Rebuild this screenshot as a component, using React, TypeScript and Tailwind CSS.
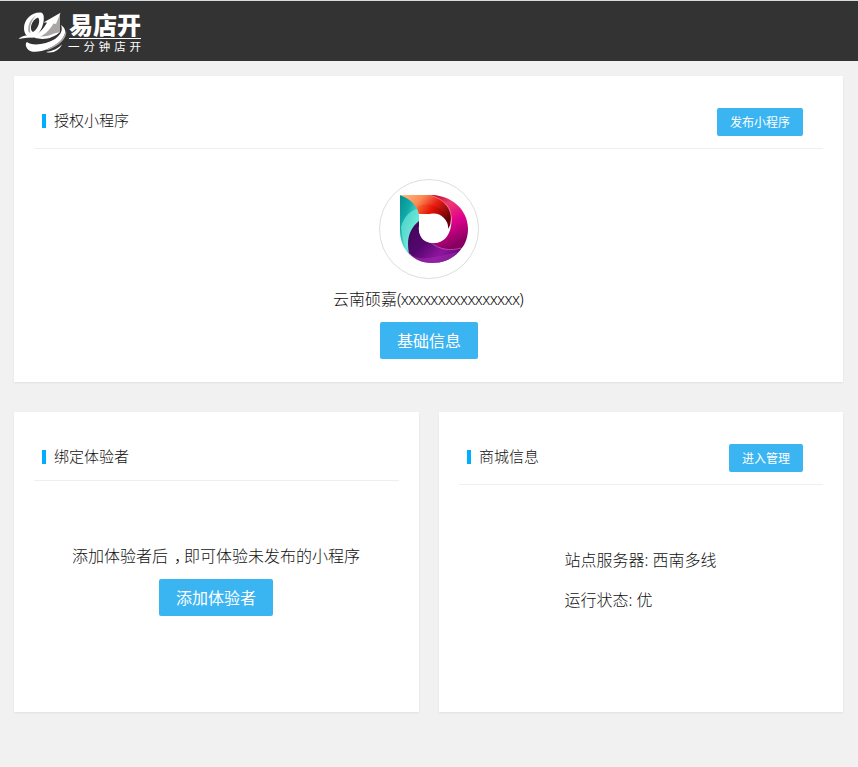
import type { ReactNode } from "react";

function BrandMark() {
  return (
    <svg viewBox="18 10 50 45" className="h-[45px] w-[50px] shrink-0">
      <path d="M48 30 L60 14 L60 32 L55 34 C51 36.5 45 37.5 38 37 Z" fill="#aaa6a5" />
      <path d="M33 36.5 C40 33 44 28 47 22.5 L43.5 22.5 L60.5 12.8 L56 24 L53.5 23.5 C49 31 44 35.5 37 38 Z" fill="#fff" />
      <path fillRule="evenodd" d="M40 12.5 C31 12.5 24 20 24 28 C24 34 27 37.5 33 37.5 C40 34 43.5 26 43.8 19 C44 15 43 12.5 40 12.5 Z M38 17.5 C41 21 38 29 33 32 C29 30 31 20 38 17.5 Z" fill="#fff" />
      <path d="M36.5 15.5 C31 18 27 25 28.5 32 L30.5 33 C29 28 31 20 36.5 15.5 Z" fill="#aaa6a5" />
      <path d="M18.5 38.9 C23 35 29 34 37 37 C30 38 25 37.5 18.5 38.9 Z" fill="#fff" />
      <path d="M28 33 C34 37 46 38 54 33.5 L60 32 C52 40 36 42 28 33 Z" fill="#fff" />
      <path d="M61 25 C66.5 28.5 66.5 34 61.5 40 C52 50 33 55 28 49.5 C25 46 25.5 43 27 42 C31 46 46 45 55 39 C61 34.5 63 30 61 25 Z" fill="#fff" />
      <path d="M66 30 C68 38 59 46 48 50 L46 50 C56 45 64 40 66 30 Z" fill="#aaa6a5" />
      <path d="M46 52 C53 51 59 48 62 44 C60 50 53 54 46 52 Z" fill="#fff" />
    </svg>
  );
}

function Avatar() {
  return (
    <svg viewBox="0 0 100 100" className="block size-[100px]">
      <defs>
        <linearGradient id="teal" x1="0" y1="0" x2=".8" y2="1">
          <stop offset="0" stopColor="#058c91" />
          <stop offset=".35" stopColor="#10aaa9" />
          <stop offset=".7" stopColor="#65e4d6" />
          <stop offset="1" stopColor="#087e87" />
        </linearGradient>
        <linearGradient id="red" x1="0" y1="0" x2="1" y2=".6">
          <stop offset="0" stopColor="#ffc27e" />
          <stop offset=".35" stopColor="#fb8a55" />
          <stop offset=".62" stopColor="#e92015" />
          <stop offset="1" stopColor="#650008" />
        </linearGradient>
        <linearGradient id="inner" x1="0" y1="0" x2="1" y2=".5">
          <stop offset="0" stopColor="#f87535" />
          <stop offset=".45" stopColor="#e81408" />
          <stop offset="1" stopColor="#700008" />
        </linearGradient>
        <linearGradient id="pink" x1="0" y1="0" x2=".35" y2="1">
          <stop offset="0" stopColor="#b60022" />
          <stop offset=".28" stopColor="#ed3c70" />
          <stop offset=".62" stopColor="#df008e" />
          <stop offset="1" stopColor="#870060" />
        </linearGradient>
        <linearGradient id="violet" x1="0" y1="0" x2="1" y2=".8">
          <stop offset="0" stopColor="#3b0754" />
          <stop offset=".45" stopColor="#56066f" />
          <stop offset=".75" stopColor="#8f159e" />
          <stop offset="1" stopColor="#5b0676" />
        </linearGradient>
      </defs>
      <circle cx="50" cy="50" r="49.5" fill="#fff" stroke="#ddd" />
      <path d="M21 16 C32 19 39 26 40 36 L40 43 C32 50 28 62 31 76 C24 69 21 61 21 51 Z" fill="url(#teal)" />
      <path d="M22 48 C25 37 32 31 39 30 L40 43 C32 48 28 60 30 74 C25 68 23 59 22 48 Z" fill="#6ee8d9" opacity=".7" />
      <path d="M21 16 H54 C66 17 74 27 72 40 C72 44 71 47 69 50 C68 41 61 35 53 35 H40 C38 27 32 20 21 16 Z" fill="url(#red)" />
      <path d="M38 28 C45 24 56 24 66 34 L69 49 C68 41 61 35 53 35 H40 Z" fill="url(#inner)" />
      <path d="M50 16 C70 15 89 29 89 50 C89 60 85 68 80 72 C70 72 60 70 54 64 C64 64 70 58 72 47 C75 32 66 20 50 16 Z" fill="url(#pink)" />
      <path d="M40 42 V50 C40 59 46 64 54 64 C62 70 72 72 82 70 C76 79 65 84 53 84 C42 84 34 79 30 74 C27 60 31 49 40 42 Z" fill="url(#violet)" />
      <path d="M30 75 C43 84 61 76 79 73 C73 80 64 84 53 84 C43 84 35 80 30 75 Z" fill="#9828a8" opacity=".65" />
      <path d="M51 63 C60 71 72 72 82 69" fill="none" stroke="#dc65b9" strokeWidth=".6" />
      <path d="M50 16 C66 20 74 30 72 44" fill="none" stroke="#fa8c88" strokeWidth=".7" />
      <circle cx="54.5" cy="49.3" r="14.7" fill="#fff" />
      <path d="M40 35 H54 V49 H40 Z" fill="#fff" />
    </svg>
  );
}

function Button({ children, small = false }: { children: ReactNode; small?: boolean }) {
  return (
    <button
      className={`block shrink-0 rounded-[2px] bg-[#3bb4f2] font-normal text-white ${
        small ? "h-7 px-[13px] pt-px text-xs leading-[27px]" : "h-[37px] px-[17px] pt-[2px] text-base leading-[35px]"
      }`}
    >
      {children}
    </button>
  );
}

function CardHeader({ title, action }: { title: string; action?: string }) {
  return (
    <div className={`flex items-start justify-between border-b border-[#eeeff5] pt-8 pr-5 pl-2 ${action ? "h-[73px]" : "h-[69px]"}`}>
      <h2 className="flex h-[26px] items-center gap-2 text-[15px]">
        <span className="h-[14px] w-1 bg-[#00aeff]" />
        <span className="pb-[2px] leading-6">{title}</span>
      </h2>
      {action && <Button small>{action}</Button>}
    </div>
  );
}

const card = "bg-white px-5 shadow-[0_1px_2px_rgba(0,0,0,0.07)]";

export default function App() {
  return (
    <div className="min-h-[767px] bg-[#f1f1f1] font-['Noto_Sans','Noto_Sans_CJK_SC',sans-serif] font-light text-[#111]">
      <header className="flex h-[61px] border-t border-[#d9dcdf] bg-[#333] pt-[9px] pl-[18px] text-white">
        <BrandMark />
        <div className="w-[73px]">
          <div className="ml-px h-[29px] border-b border-white font-['Noto_Sans_CJK_SC',sans-serif] text-[24px] leading-[27px] font-black whitespace-nowrap">易店开</div>
          <div className="flex h-[16px] justify-between text-[11.5px] leading-[16px] font-normal">
            {"一分钟店开".split("").map((c) => <span key={c}>{c}</span>)}
          </div>
        </div>
      </header>

      <main className="grid grid-cols-[405px_404px] gap-x-5 gap-y-[30px] pt-[15px] pl-[14px]">
        <section className={`${card} col-span-2 h-[306px]`}>
          <CardHeader title="授权小程序" action="发布小程序" />
          <div className="flex flex-col items-center pt-[30px]">
            <Avatar />
            <p className="mt-2 mb-[11px] pr-px text-base leading-6">
              云南硕嘉<span className="tracking-[-0.65px]">(xxxxxxxxxxxxxxxx)</span>
            </p>
            <div className="pl-px">
              <Button>基础信息</Button>
            </div>
          </div>
        </section>

        <section className={`${card} h-[300px]`}>
          <CardHeader title="绑定体验者" />
          <div className="flex flex-col items-center pt-[63px] pr-px">
            <p className="mb-[11px] text-base leading-6 whitespace-nowrap">
              添加体验者后<span className="pr-[2px] pl-[6px] [font-feature-settings:'halt']">，</span>即可体验未发布的小程序
            </p>
            <Button>添加体验者</Button>
          </div>
        </section>

        <section className={`${card} h-[300px]`}>
          <CardHeader title="商城信息" action="进入管理" />
          <div className="pt-[55px] pl-[105.5px] text-base leading-10">
            <p>站点服务器: 西南多线</p>
            <p>运行状态: 优</p>
          </div>
        </section>
      </main>
    </div>
  );
}
